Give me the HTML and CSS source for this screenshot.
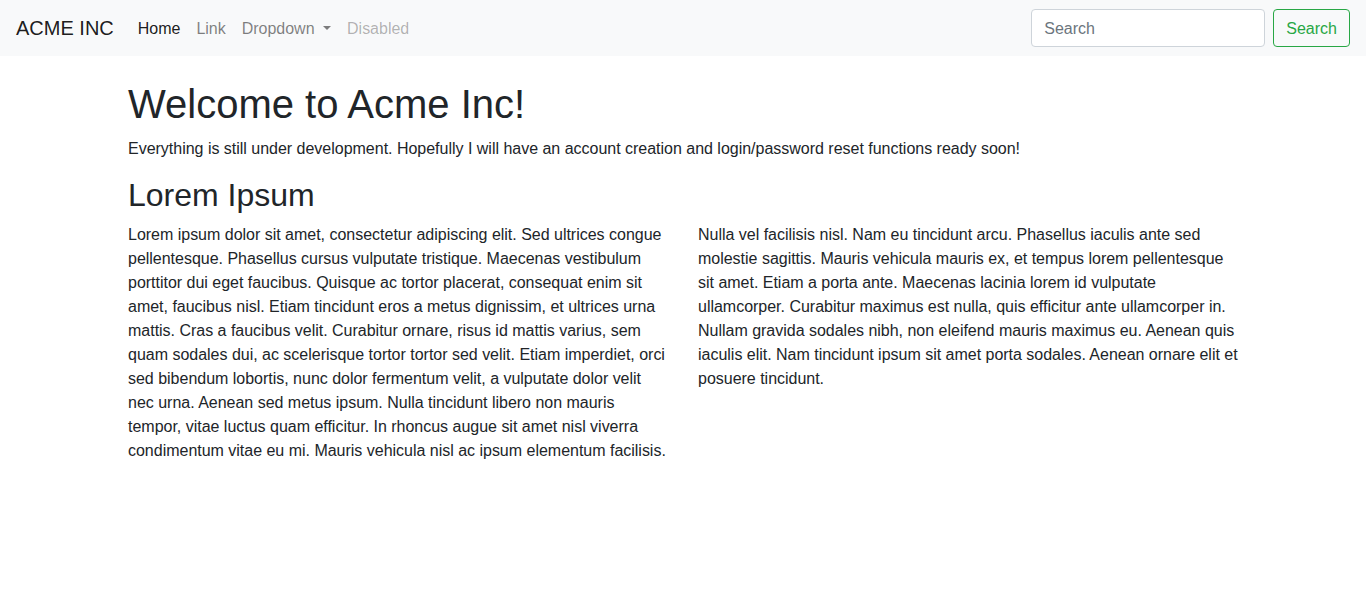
FILE: index.html
```html
<!DOCTYPE html>
<html lang="en">
<head>
<meta charset="utf-8">
<title>Acme Inc</title>
<link rel="stylesheet" href="styles.css">
</head>
<body>
<nav class="navbar">
  <a class="brand" href="#">ACME INC</a>
  <ul class="nav">
    <li><a class="nav-link active" href="#">Home</a></li>
    <li><a class="nav-link" href="#">Link</a></li>
    <li><a class="nav-link dropdown" href="#">Dropdown </a></li>
    <li><a class="nav-link disabled" href="#">Disabled</a></li>
  </ul>
  <form class="search-form">
    <input class="search-input" type="search" placeholder="Search">
    <button class="btn-search" type="button">Search</button>
  </form>
</nav>
<main class="container">
  <h1 class="title">Welcome to Acme Inc!</h1>
  <p class="lead-text">Everything is still under development. Hopefully I will have an account creation and login/password reset functions ready soon!</p>
  <h2 class="subtitle">Lorem Ipsum</h2>
  <div class="row">
    <div class="col">
      <p>Lorem ipsum dolor sit amet, consectetur adipiscing elit. Sed ultrices congue pellentesque. Phasellus cursus vulputate tristique. Maecenas vestibulum porttitor dui eget faucibus. Quisque ac tortor placerat, consequat enim sit amet, faucibus nisl. Etiam tincidunt eros a metus dignissim, et ultrices urna mattis. Cras a faucibus velit. Curabitur ornare, risus id mattis varius, sem quam sodales dui, ac scelerisque tortor tortor sed velit. Etiam imperdiet, orci sed bibendum lobortis, nunc dolor fermentum velit, a vulputate dolor velit nec urna. Aenean sed metus ipsum. Nulla tincidunt libero non mauris tempor, vitae luctus quam efficitur. In rhoncus augue sit amet nisl viverra condimentum vitae eu mi. Mauris vehicula nisl ac ipsum elementum facilisis.</p>
    </div>
    <div class="col">
      <p>Nulla vel facilisis nisl. Nam eu tincidunt arcu. Phasellus iaculis ante sed molestie sagittis. Mauris vehicula mauris ex, et tempus lorem pellentesque sit amet. Etiam a porta ante. Maecenas lacinia lorem id vulputate ullamcorper. Curabitur maximus est nulla, quis efficitur ante ullamcorper in. Nullam gravida sodales nibh, non eleifend mauris maximus eu. Aenean quis iaculis elit. Nam tincidunt ipsum sit amet porta sodales. Aenean ornare elit et posuere tincidunt.</p>
    </div>
  </div>
</main>
</body>
</html>
```

FILE: styles.css
```css
* { box-sizing: border-box; }
html, body {
  margin: 0;
  padding: 0;
}
body {
  font-family: "Liberation Sans", Arial, sans-serif;
  font-size: 16px;
  line-height: 1.5;
  letter-spacing: -0.014px;
  color: #212529;
  background: #fff;
}
a { text-decoration: none; }

.navbar {
  display: flex;
  align-items: center;
  padding: 8px 16px;
  background: #f8f9fa;
  height: 56px;
}
.brand {
  font-size: 20px;
  line-height: 30px;
  padding: 5px 0;
  margin-right: 16px;
  letter-spacing: 0;
  color: rgba(0,0,0,.9);
  white-space: nowrap;
}
.nav {
  display: flex;
  list-style: none;
  margin: 0 auto 0 0;
  padding: 0;
}
.nav-link {
  display: block;
  padding: 9px 8px 7px;
  color: rgba(0,0,0,.5);
  white-space: pre;
}
.nav-link.active { color: rgba(0,0,0,.9); }
.nav-link.disabled { color: rgba(0,0,0,.3); }
.nav-link.dropdown::after {
  content: "";
  display: inline-block;
  margin-left: .255em;
  vertical-align: .255em;
  border-top: .3em solid;
  border-right: .3em solid transparent;
  border-left: .3em solid transparent;
  border-bottom: 0;
}
.search-form {
  display: flex;
  align-items: center;
}
.search-input {
  width: 234px;
  height: 38px;
  padding: 7px 12px 5px;
  font: inherit;
  color: #495057;
  background: #fff;
  border: 1px solid #ced4da;
  border-radius: 4px;
  margin-right: 8px;
}
.search-input::placeholder { color: #6c757d; opacity: 1; }
.btn-search {
  height: 38px;
  padding: 7px 12px 5px;
  font: inherit;
  color: #28a745;
  background: transparent;
  border: 1px solid #28a745;
  border-radius: 4px;
}

.container {
  max-width: 1140px;
  margin: 24px auto 0;
  padding: 0 15px;
}
.title {
  font-size: 40px;
  font-weight: 500;
  line-height: 1.2;
  letter-spacing: 0;
  margin: 0 0 8px;
}
.lead-text {
  padding-top: 1px;
  margin: 0 0 15px;
}
.subtitle {
  font-size: 32px;
  font-weight: 500;
  line-height: 1.2;
  letter-spacing: 0;
  margin: 0 0 8px;
}
.row {
  display: flex;
  margin: 0 -15px;
}
.col {
  flex: 0 0 50%;
  max-width: 50%;
  padding: 0 15px;
}
.col p {
  padding-top: 1px;
  margin: 0 0 15px;
}
```
